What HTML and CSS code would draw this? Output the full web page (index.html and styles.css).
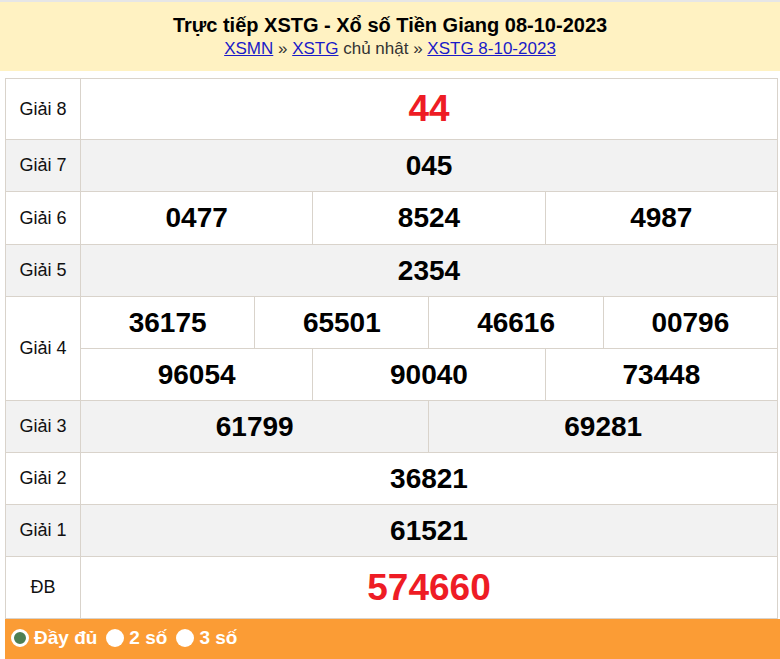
FILE: index.html
```html
<!DOCTYPE html>
<html lang="vi">
<head>
<meta charset="utf-8">
<title>XSTG 08-10-2023</title>
<link rel="stylesheet" href="styles.css">
</head>
<body>
<div class="topline"></div>
<header class="head">
  <h1 class="title">Trực tiếp XSTG - Xổ số Tiền Giang 08-10-2023</h1>
  <div class="crumbs"><a href="#">XSMN</a> » <a href="#">XSTG</a> chủ nhật » <a href="#">XSTG 8-10-2023</a></div>
</header>
<div class="wrap">
<table class="kq">
  <colgroup>
    <col class="c-label">
    <col><col><col><col><col><col><col><col><col><col><col><col>
  </colgroup>
  <tr class="tall"><td class="lbl">Giải 8</td><td colspan="12" class="num red">44</td></tr>
  <tr class="alt"><td class="lbl">Giải 7</td><td colspan="12" class="num">045</td></tr>
  <tr class="plus"><td class="lbl">Giải 6</td><td colspan="4" class="num">0477</td><td colspan="4" class="num">8524</td><td colspan="4" class="num">4987</td></tr>
  <tr class="alt"><td class="lbl">Giải 5</td><td colspan="12" class="num">2354</td></tr>
  <tr><td class="lbl" rowspan="2">Giải 4</td><td colspan="3" class="num">36175</td><td colspan="3" class="num">65501</td><td colspan="3" class="num">46616</td><td colspan="3" class="num">00796</td></tr>
  <tr><td colspan="4" class="num">96054</td><td colspan="4" class="num">90040</td><td colspan="4" class="num">73448</td></tr>
  <tr class="alt"><td class="lbl">Giải 3</td><td colspan="6" class="num">61799</td><td colspan="6" class="num">69281</td></tr>
  <tr><td class="lbl">Giải 2</td><td colspan="12" class="num">36821</td></tr>
  <tr class="alt"><td class="lbl">Giải 1</td><td colspan="12" class="num">61521</td></tr>
  <tr class="tall db"><td class="lbl">ĐB</td><td colspan="12" class="num red">574660</td></tr>
</table>
<div class="opts">
  <label class="opt"><span class="radio on"></span>Đầy đủ</label>
  <label class="opt"><span class="radio"></span>2 số</label>
  <label class="opt"><span class="radio"></span>3 số</label>
</div>
</div>
</body>
</html>
```
FILE: styles.css
```css
html, body { margin: 0; padding: 0; background: #fff; }
body { font-family: "Liberation Sans", Arial, sans-serif; color: #000; }
.topline { height: 2px; background: #e6e6e6; }
.head {
  background: #fff2c2;
  height: 69px;
  box-sizing: border-box;
  padding-top: 11px;
  text-align: center;
}
.title {
  margin: 0;
  font-weight: bold;
  font-size: 20px;
  line-height: 24px;
  color: #000;
}
.crumbs {
  font-size: 17px;
  line-height: 24px;
  color: #333;
}
.crumbs a { color: #1a1ac8; }
.wrap { padding: 7px 0 0 5px; }
.kq {
  width: 773px;
  border-collapse: collapse;
  table-layout: fixed;
}
.c-label { width: 75px; }
.kq td {
  border: 1px solid #d9d3cb;
  padding: 0;
  height: 51px;
  text-align: center;
  vertical-align: middle;
}
.kq tr.plus td { height: 52px; }
.kq tr.tall td { height: 60px; }
.kq tr.db td { height: 61px; }
.kq tr.alt td { background: #f2f2f2; }
.lbl { font-size: 18px; color: #111; }
.num { font-size: 28px; font-weight: bold; }
.num.red { color: #ee1c25; font-size: 37px; }
.opts {
  background: #fb9c35;
  height: 41px;
  box-sizing: border-box;
  padding: 0 0 3px 6px;
  display: flex;
  align-items: center;
  gap: 9px;
  color: #fff;
  font-weight: bold;
  font-size: 19px;
}
.opt { display: flex; align-items: center; gap: 5px; }
.radio {
  width: 18px;
  height: 18px;
  border-radius: 50%;
  background: #fff;
  box-sizing: border-box;
}
.radio.on { background: #4f7f52; border: 3px solid #fff; }
```
